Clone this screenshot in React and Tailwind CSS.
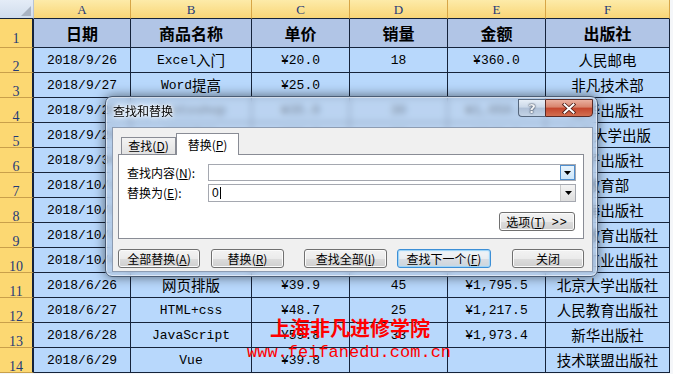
import React from 'react';

const CJK = /([\u3000-\u9fff\uff00-\uffef]+)/;

function T({ s }) {
  const parts = s.split(CJK).filter(Boolean);
  return parts.map((p, i) =>
    CJK.test(p) ? (
      <span key={i} className="font-['Noto_Sans_CJK_SC',sans-serif] text-[14.5px]">{p}</span>
    ) : (
      <span key={i} className="font-['Liberation_Mono',monospace] text-[13px]">{p}</span>
    )
  );
}

const cols = ['A', 'B', 'C', 'D', 'E', 'F'];
const head = ['日期', '商品名称', '单价', '销量', '金额', '出版社'];
const rows = [
  ['2018/9/26', 'Excel入门', '¥20.0', '18', '¥360.0', '人民邮电'],
  ['2018/9/27', 'Word提高', '¥25.0', '', '', '非凡技术部'],
  ['2018/9/28', 'Photoshop', '¥35.0', '30', '¥1,050.0', '清华出版社'],
  ['2018/9/29', 'PPT设计', '¥32.0', '20', '¥640.0', '北京大学出版'],
  ['2018/9/30', 'Access', '¥28.5', '16', '¥456.0', '电子出版社'],
  ['2018/10/1', 'PS教程', '¥45.0', '22', '¥990.0', '教育部'],
  ['2018/10/2', 'CAD制图', '¥52.0', '15', '¥780.0', '上海出版社'],
  ['2018/10/3', 'Python', '¥66.0', '12', '¥792.0', '高等教育出版社'],
  ['2018/10/4', 'Java', '¥58.0', '10', '¥580.0', '机械工业出版社'],
  ['2018/6/26', '网页排版', '¥39.9', '45', '¥1,795.5', '北京大学出版社'],
  ['2018/6/27', 'HTML+css', '¥48.7', '25', '¥1,217.5', '人民教育出版社'],
  ['2018/6/28', 'JavaScript', '¥59.8', '33', '¥1,973.4', '新华出版社'],
  ['2018/6/29', 'Vue', '¥39.8', '', '', '技术联盟出版社'],
];

const rowHead =
  'flex items-end justify-center border-b border-b-[#c9a04a] border-r-2 border-r-[#15233a] bg-[#fcd872] text-[14px] leading-[10px] text-[#1f3a78] font-["Liberation_Serif",serif]';

const btn =
  'flex h-[19px] items-center justify-center rounded-[3px] border border-[#707070] bg-[linear-gradient(#f3f3f3,#ebebeb_50%,#dddddd_50%,#cfcfcf)] shadow-[inset_0_0_0_1px_#fbfbfb] text-[12px] text-black';

function Acc({ label, k, tail = '' }) {
  return (
    <span>
      {label}(<span className="underline">{k}</span>){tail}
    </span>
  );
}

function Dialog() {
  return (
    <div className="absolute left-[105px] top-[96px] h-[181px] w-[493px] rounded-[7px] border border-[#4b5d75] bg-[rgba(188,208,234,0.6)] backdrop-blur-[3px] shadow-[0_0_12px_rgba(0,0,0,0.55),inset_0_0_0_1px_rgba(255,255,255,0.55)] font-['Noto_Sans_CJK_SC',sans-serif] text-[12px] text-black">
      <div className="flex h-full flex-col pb-[4px] pl-[6px] pr-[4px]">
        <div className="flex h-[30px] items-start justify-between">
          <div className="pl-[1px] pt-[7px] leading-[14px] [text-shadow:0_0_6px_#fff,0_0_4px_#fff,0_0_2px_#fff]">
            查找和替换
          </div>
          <div className="mt-[2px] flex">
            <div className="flex h-[18px] w-[27px] items-center justify-center rounded-bl-[4px] border border-r-0 border-[#55667c] bg-[linear-gradient(#e6eef7,#cbd8e8_45%,#aebfd6_50%,#c3d3e6)] font-['DejaVu_Sans',sans-serif] text-[13px] font-bold leading-none text-[#f2f4f7] [text-shadow:0_0_1px_#243245,0_0_2px_#243245]">
              ?
            </div>
            <div className="flex h-[18px] w-[48px] items-center justify-center rounded-br-[4px] border border-[#5a2a25] bg-[linear-gradient(#eab0a0,#d8836c_45%,#c4452c_50%,#d36f50)]">
              <svg width="14" height="11" viewBox="0 0 14 11">
                <path d="M2.5 1.5 L11.5 9.5 M11.5 1.5 L2.5 9.5" stroke="#4a1a14" strokeWidth="3.6" strokeLinecap="square" />
                <path d="M2.5 1.5 L11.5 9.5 M11.5 1.5 L2.5 9.5" stroke="#ffffff" strokeWidth="2" strokeLinecap="square" />
              </svg>
            </div>
          </div>
        </div>
        <div className="flex flex-1 flex-col border border-[#8d9cb2] bg-[#f0f0f0] pt-[5px]">
          <div className="flex h-[21px] items-end pl-[8px]">
            <div className="flex h-[17px] w-[55px] items-center justify-center border border-b-0 border-[#898c95] bg-[linear-gradient(#f3f3f3,#e2e2e2)] leading-none">
              <Acc label="查找" k="D" />
            </div>
            <div className="relative z-10 -mb-px flex h-[22px] w-[63px] items-center justify-center border border-b-0 border-[#898c95] bg-white leading-none">
              <Acc label="替换" k="P" />
            </div>
          </div>
          <div className="ml-[5px] mr-[8px] flex h-[85px] flex-col border border-[#898c95] bg-white pl-[8px] pr-[7px] pt-[9px]">
            <div className="flex h-[17px] items-center">
              <div className="w-[81px] leading-none">
                <Acc label="查找内容" k="N" tail=":" />
              </div>
              <div className="flex h-full flex-1 items-stretch justify-end border border-[#a5a8b0] bg-white">
                <div className="flex w-[15px] items-center justify-center border border-[#4f8fcf] bg-[linear-gradient(#e8f4fd,#cde6fa)]">
                  <svg width="7" height="4" viewBox="0 0 7 4"><path d="M0 0H7L3.5 4Z" fill="#000" /></svg>
                </div>
              </div>
            </div>
            <div className="mt-[3px] flex h-[18px] items-center">
              <div className="w-[81px] leading-none">
                <Acc label="替换为" k="E" tail=":" />
              </div>
              <div className="flex h-full flex-1 items-stretch border border-[#a5a8b0] bg-white">
                <div className="flex flex-1 items-center pl-[3px] font-['Liberation_Sans',sans-serif] text-[12px] leading-none">
                  <span>0</span>
                  <span className="ml-[1px] h-[12px] w-px bg-black" />
                </div>
                <div className="flex w-[15px] items-center justify-center border-l border-[#c8c8c8] bg-[linear-gradient(#f4f4f4,#dedede)]">
                  <svg width="7" height="4" viewBox="0 0 7 4"><path d="M0 0H7L3.5 4Z" fill="#000" /></svg>
                </div>
              </div>
            </div>
            <div className="mt-[10px] flex justify-end pr-[1px]">
              <div className={btn + ' h-[18px] w-[76px] gap-[6px]'}>
                <Acc label="选项" k="T" />
                <span className="font-['Liberation_Sans',sans-serif] tracking-[1px]">&gt;&gt;</span>
              </div>
            </div>
          </div>
          <div className="ml-[5px] mt-[10px] flex">
            <div className={btn + ' w-[82px]'}><Acc label="全部替换" k="A" /></div>
            <div className={btn + ' ml-[11px] w-[73px]'}><Acc label="替换" k="R" /></div>
            <div className={btn + ' ml-[20px] w-[83px]'}><Acc label="查找全部" k="I" /></div>
            <div className="ml-[10px] flex h-[19px] w-[94px] items-center justify-center rounded-[3px] border border-[#3c8fd6] bg-[linear-gradient(#f2f5f8,#e9edf1_50%,#d9dee4_50%,#ccd3da)] text-[12px] shadow-[inset_0_0_0_1px_#9fd4f7,inset_0_0_2px_1px_#bfe3fa]">
              <Acc label="查找下一个" k="F" />
            </div>
            <div className={btn + ' ml-[21px] w-[72px]'}>关闭</div>
          </div>
        </div>
      </div>
    </div>
  );
}

export default function App() {
  return (
    <div className="relative h-[374px] w-[673px] overflow-hidden bg-[#f4f6f9]">
      <div className="grid grid-cols-[34px_97px_121px_98px_98px_98px_124px] grid-rows-[19px_29px_repeat(13,25px)]">
        <div className="flex items-end justify-end border-b border-r border-b-[#15233a] border-r-[#b8c4d4] bg-[linear-gradient(#e4ecf7,#d0dcec)] pb-[2px] pr-[2px]">
          <svg width="10" height="10" viewBox="0 0 10 10"><path d="M10 0V10H0Z" fill="#a9b3c2" /></svg>
        </div>
        {cols.map((c) => (
          <div
            key={c}
            className="flex items-center justify-center border-b border-r border-b-[#15233a] border-r-[#d7a647] bg-[linear-gradient(#fdeba9,#f9d677)] font-['Liberation_Serif',serif] text-[13px] leading-none text-[#1f3a78]"
          >
            {c}
          </div>
        ))}
        <div className={rowHead + ' pb-[3px]'}>1</div>
        {head.map((h) => (
          <div
            key={h}
            className="flex items-center justify-center border-b border-r border-[#15233a] bg-[#b1c5e6] font-['Noto_Sans_CJK_SC',sans-serif] text-[16px] font-bold leading-none text-black"
          >
            {h}
          </div>
        ))}
        {rows.map((r, i) => (
          <React.Fragment key={i}>
            <div className={rowHead}>{i + 2}</div>
            {r.map((v, j) => (
              <div
                key={j}
                className="flex items-center justify-center overflow-hidden whitespace-nowrap border-b border-r border-[#15233a] bg-[#b8d8fc] pt-[1px] leading-none text-black"
              >
                <T s={v} />
              </div>
            ))}
          </React.Fragment>
        ))}
      </div>
      <Dialog />
      <div className="pointer-events-none absolute left-[270px] top-[318px] font-['Noto_Sans_CJK_SC',sans-serif] text-[20px] font-bold leading-none text-[#ff0000]">
        上海非凡进修学院
      </div>
      <div className="pointer-events-none absolute left-[247px] top-[344px] font-['Liberation_Mono',monospace] text-[17px] leading-none text-[#ff0000]">
        www.feifanedu.com.cn
      </div>
    </div>
  );
}
